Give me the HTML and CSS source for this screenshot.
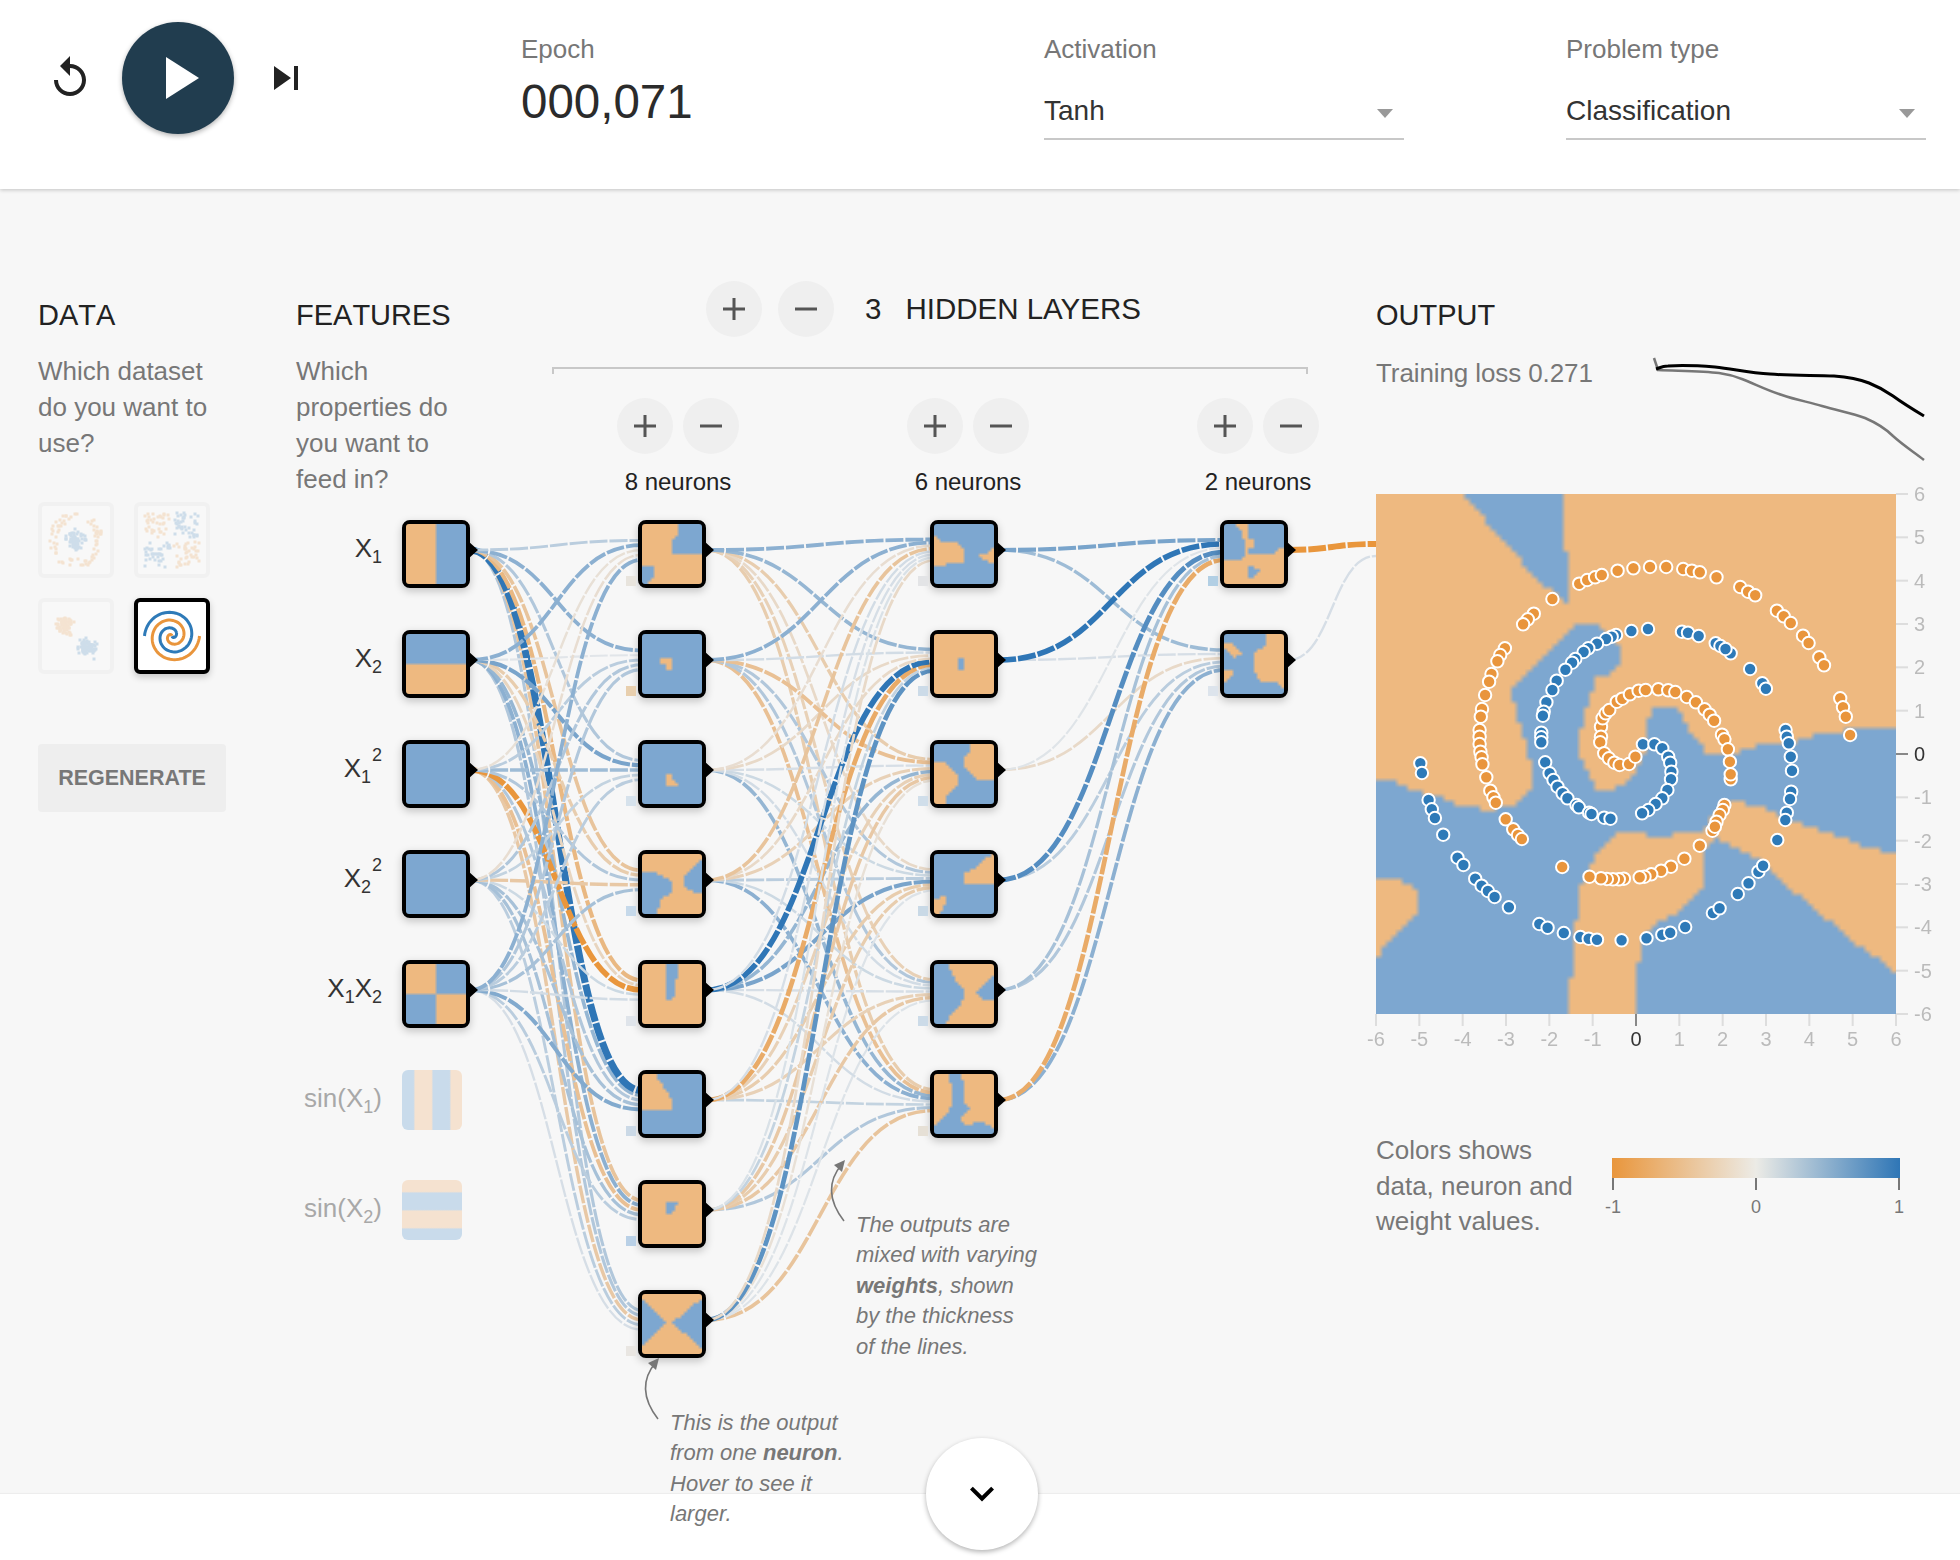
FILE: index.html
```html
<!DOCTYPE html>
<html lang="en">
<head>
<meta charset="utf-8">
<title>Neural network playground</title>
<link rel="stylesheet" href="styles.css">
</head>
<body>
<header class="topbar">
  <div class="controls">
    <svg class="icon48" viewBox="0 0 24 24"><path d="M12 5V1L7 6l5 5V7c3.31 0 6 2.69 6 6s-2.69 6-6 6-6-2.69-6-6H4c0 4.42 3.58 8 8 8s8-3.58 8-8-3.58-8-8-8z"/></svg>
    <div class="play"><svg class="play-glyph" viewBox="0 0 33 42"><path d="M0 0l33 21L0 42z"/></svg></div>
    <svg class="icon48" viewBox="0 0 24 24"><path d="M6 18l8.5-6L6 6v12zM16 6v12h2V6h-2z"/></svg>
  </div>
  <div class="metric">
    <div class="top-label">Epoch</div>
    <div class="epoch">000,071</div>
  </div>
  <div class="metric">
    <div class="top-label">Activation</div>
    <div class="select"><span>Tanh</span><i class="caret"></i></div>
  </div>
  <div class="metric">
    <div class="top-label">Problem type</div>
    <div class="select"><span>Classification</span><i class="caret"></i></div>
  </div>
</header>

<main class="workspace">
  <section class="data-col">
    <h4>DATA</h4>
    <p class="lead">Which dataset<br>do you want to<br>use?</p>
    <div class="datasets">
      <div class="dataset" data-kind="circle"></div>
      <div class="dataset" data-kind="xor"></div>
      <div class="dataset" data-kind="gauss"></div>
      <div class="dataset selected" data-kind="spiral"></div>
    </div>
    <button class="regen">REGENERATE</button>
  </section>

  <section class="network" id="network">
    <div class="features">
      <h4>FEATURES</h4>
      <p class="lead">Which<br>properties do<br>you want to<br>feed in?</p>
    </div>
    <div class="layers">
      <div class="layers-top">
        <button class="round"><svg viewBox="0 0 24 24"><path d="M12 1v22M1 12h22"/></svg></button>
        <button class="round"><svg viewBox="0 0 24 24"><path d="M1 12h22"/></svg></button>
        <span class="layer-count">3</span>
        <span class="layer-title">HIDDEN LAYERS</span>
      </div>
      <div class="bracket"></div>
    </div>
    <div class="layer-head" data-center="678">
      <div class="pair">
        <button class="round"><svg viewBox="0 0 24 24"><path d="M12 1v22M1 12h22"/></svg></button>
        <button class="round"><svg viewBox="0 0 24 24"><path d="M1 12h22"/></svg></button>
      </div>
      <div class="neurons">8 neurons</div>
    </div>
    <div class="layer-head" data-center="968">
      <div class="pair">
        <button class="round"><svg viewBox="0 0 24 24"><path d="M12 1v22M1 12h22"/></svg></button>
        <button class="round"><svg viewBox="0 0 24 24"><path d="M1 12h22"/></svg></button>
      </div>
      <div class="neurons">6 neurons</div>
    </div>
    <div class="layer-head" data-center="1258">
      <div class="pair">
        <button class="round"><svg viewBox="0 0 24 24"><path d="M12 1v22M1 12h22"/></svg></button>
        <button class="round"><svg viewBox="0 0 24 24"><path d="M1 12h22"/></svg></button>
      </div>
      <div class="neurons">2 neurons</div>
    </div>
    <div class="feature-label" data-row="0">X<sub>1</sub></div>
    <div class="feature-label" data-row="1">X<sub>2</sub></div>
    <div class="feature-label" data-row="2">X<sub>1</sub><sup>2</sup></div>
    <div class="feature-label" data-row="3">X<sub>2</sub><sup>2</sup></div>
    <div class="feature-label" data-row="4">X<sub>1</sub>X<sub>2</sub></div>
    <div class="feature-label off" data-row="5">sin(X<sub>1</sub>)</div>
    <div class="feature-label off" data-row="6">sin(X<sub>2</sub>)</div>
    <div class="sin-node sin-x1" data-row="5"></div>
    <div class="sin-node sin-x2" data-row="6"></div>
  </section>

  <section class="output-col">
    <h4>OUTPUT</h4>
    <div class="loss-row">
      <span class="loss-text">Training loss 0.271</span>
      <svg class="loss-chart" viewBox="0 0 270 104">
        <path class="loss-test" d="M0 0L4 12C30 13 50 13 65 15C80 17 85 20 93 23C105 28 115 33 128 37C142 42 155 44 168 48C185 53 198 55 211 60C225 66 232 71 239 78C250 88 260 94 270 102"/>
        <path class="loss-train" d="M2 11C5 10 9 8 14 8C30 7 48 8 61 9C80 11 95 15 116 16C140 18 160 17 180 18C195 19 205 21 215 25C225 29 232 33 239 38C250 46 260 52 270 58"/>
      </svg>
    </div>
    <div class="plot" id="plot">
      <canvas id="heatmap" width="100" height="100"></canvas>
      <svg id="plot-overlay" viewBox="0 0 520 520"></svg>
    </div>
    <div class="legend">
      <p class="legend-text">Colors shows<br>data, neuron and<br>weight values.</p>
      <div class="scale">
        <div class="scale-bar"></div>
        <div class="scale-ticks">
          <div class="tick"><i></i><span>-1</span></div>
          <div class="tick"><i></i><span>0</span></div>
          <div class="tick"><i></i><span>1</span></div>
        </div>
      </div>
    </div>
  </section>
</main>

<footer class="bottom"></footer>

<div class="note note-weights">
  <svg class="note-arrow" viewBox="0 0 20 62"><path class="arrow-line" d="M16 61Q-8 30 14 4"/><path class="arrow-head" d="M17 0L6 5L14 12z"/></svg>
  The outputs are<br>mixed with varying<br><b>weights</b>, shown<br>by the thickness<br>of the lines.
</div>
<div class="note note-neuron">
  <svg class="note-arrow" viewBox="0 0 20 62"><path class="arrow-line" d="M16 61Q-8 30 14 4"/><path class="arrow-head" d="M17 0L6 5L14 12z"/></svg>
  This is the output<br>from one <b>neuron</b>.<br>Hover to see it<br>larger.
</div>
<div class="fab"><svg viewBox="0 0 24 24"><path d="M7.41 7.84L12 12.42l4.59-4.58L18 9.25l-6 6-6-6z"/></svg></div>

<script src="script.js"></script>
</body>
</html>
```

FILE: styles.css
```css
* { box-sizing: border-box; }
html, body { margin: 0; padding: 0; }
body {
  position: relative;
  width: 1960px;
  height: 1560px;
  overflow: hidden;
  background: #fff;
  font-family: "Liberation Sans", Arial, sans-serif;
  color: #222;
}
button { font-family: inherit; border: 0; padding: 0; }

/* top bar */
.topbar {
  position: relative;
  z-index: 3;
  display: grid;
  grid-template-columns: 521px 523px 522px 360px;
  height: 189px;
  background: #fff;
  box-shadow: 0 1px 4px rgba(0, 0, 0, .22);
}
.controls { display: flex; align-items: center; gap: 28px; height: 112px; margin-top: 22px; padding-left: 46px; }
.icon48 { width: 48px; height: 48px; fill: #222; }
.play {
  display: flex; align-items: center; justify-content: center;
  width: 112px; height: 112px; border-radius: 50%;
  background: #213d4f; box-shadow: 0 2px 5px rgba(0, 0, 0, .3);
}
.play-glyph { width: 33px; height: 42px; margin-left: 9px; fill: #fff; }
.metric { padding-top: 34px; }
.top-label { font-size: 26px; line-height: 30px; color: #777; }
.epoch { margin-top: 10px; font-size: 47.5px; line-height: 56px; color: #2b2b2b; }
.select {
  display: flex; align-items: center; justify-content: space-between;
  width: 360px; height: 49px; margin-top: 27px; padding: 0 11px 7px 0;
  border-bottom: 2px solid #c8c8c8;
  font-size: 28px; line-height: 40px; color: #333;
}
.caret { width: 0; height: 0; margin-top: 5px; border: 8px solid transparent; border-top: 9px solid #999; border-bottom: 0; }

/* workspace */
.workspace { display: flex; height: 1305px; background: #f7f7f7; }
h4 { margin: 0; font-size: 29px; font-weight: 400; font-kerning: none; line-height: 40px; color: #222; }
.lead { margin: 18px 0 0; font-size: 26px; line-height: 36px; color: #777; }

.data-col { width: 296px; padding: 106px 0 0 38px; }
.datasets { display: grid; grid-template-columns: 76px 76px; gap: 20px; margin-top: 41px; }
.dataset {
  width: 76px; height: 76px; border: 4px solid #ddd; border-radius: 6px;
  background: #fff; opacity: .2; overflow: hidden;
}
.dataset svg { display: block; width: 68px; height: 68px; }
.dataset.selected { border-color: #000; opacity: 1; box-shadow: 0 3px 7px rgba(0, 0, 0, .2); }
.regen {
  display: block; width: 188px; height: 68px; margin-top: 70px;
  border-radius: 4px; background: #eee; color: #777;
  font-size: 21.5px; font-weight: 700;
}

.network { position: relative; display: flex; width: 1080px; }
.features { width: 180px; padding-top: 106px; }
.layers { padding-top: 92px; }
.layers-top { display: flex; align-items: center; height: 56px; padding-left: 230px; }
.layers-top .round + .round { margin-left: 16px; }
.layer-count { margin-left: 31px; font-size: 29.5px; color: #222; }
.layer-title { margin-left: 24px; font-size: 29.5px; color: #222; }
.bracket { width: 756px; height: 7px; margin: 30px 0 0 76px; border: 2px solid #c8c8c8; border-bottom: 0; }
.round {
  display: flex; align-items: center; justify-content: center;
  width: 56px; height: 56px; border-radius: 50%; background: #efefef;
}
.round svg { width: 24px; height: 24px; fill: none; stroke: #555; stroke-width: 3; }

.layer-head { position: absolute; top: 209px; display: flex; flex-direction: column; align-items: center; width: 200px; margin-left: -100px; }
.pair { display: flex; gap: 10px; }
.neurons { margin-top: 13px; font-size: 24px; line-height: 30px; color: #222; }

.links { position: absolute; left: 0; top: 0; width: 1080px; height: 1305px; overflow: visible; }
.link { fill: none; stroke-dasharray: 18 2; }
.marker { fill: #000; }

.node {
  position: absolute; width: 68px; height: 68px;
  border: 4px solid #000; border-radius: 8px;
  box-shadow: 0 3px 8px rgba(0, 0, 0, .22);
  background: #000;
}
.node canvas { display: block; width: 60px; height: 60px; border-radius: 3px; }
.bias { position: absolute; width: 10px; height: 10px; }

.feature-label {
  position: absolute; left: -136px; width: 222px; height: 56px;
  display: flex; align-items: center; justify-content: flex-end;
  font-size: 26px; line-height: 1; color: #333; white-space: pre;
}
.feature-label.off { color: #a8a8a8; }
.feature-label sub { font-size: 18px; line-height: 0; position: relative; top: 9px; vertical-align: baseline; }
.feature-label sup { font-size: 18px; line-height: 0; position: relative; top: -13px; vertical-align: baseline; margin-left: 1px; }

.sin-node { position: absolute; left: 106px; width: 60px; height: 60px; border-radius: 6px; }
.sin-x1 { background: linear-gradient(90deg, #c9dbeb 0 19%, #f5e2d0 22% 49%, #c9dbeb 52% 79%, #f5e2d0 82%); }
.sin-x2 { background: linear-gradient(180deg, #f5e2d0 0 19%, #c9dbeb 22% 49%, #f5e2d0 52% 79%, #c9dbeb 82%); }

/* output */
.output-col { width: 584px; padding-top: 106px; }
.loss-row { display: flex; height: 107px; margin-top: 18px; }
.loss-text { width: 278px; font-size: 26px; line-height: 40px; color: #777; letter-spacing: -.1px; }
.loss-chart { width: 270px; height: 104px; margin-top: 5px; overflow: visible; fill: none; }
.loss-test { stroke: #777; stroke-width: 2.5; }
.loss-train { stroke: #000; stroke-width: 3; }
.plot { position: relative; width: 520px; height: 520px; margin-top: 34px; }
.plot canvas { display: block; width: 520px; height: 520px; }
#plot-overlay { position: absolute; left: 0; top: 0; width: 520px; height: 520px; overflow: visible; }
.dot { stroke: #fff; stroke-width: 2; }
.axis-tick { stroke: #ddd; stroke-width: 2; }
.axis-tick.zero { stroke: #888; }
.axis-label { font-size: 20px; fill: #bbb; }
.axis-label.zero { fill: #333; }

.legend { display: flex; margin-top: 119px; }
.legend-text { width: 236px; margin: 0; font-size: 26px; line-height: 35.5px; color: #777; }
.scale { width: 288px; margin-top: 25px; }
.scale-bar { height: 20px; background: linear-gradient(90deg, #e9963c, #ecebe6 50%, #2f76b6); }
.scale-ticks { display: flex; justify-content: space-between; }
.tick { display: flex; flex-direction: column; align-items: center; width: 2px; }
.tick i { flex: none; width: 2px; height: 12px; background: #777; }
.tick span { margin-top: 6px; font-size: 18px; line-height: 22px; color: #777; }

/* bottom */
.bottom { height: 66px; background: #fff; box-shadow: 0 -1px 1px rgba(0, 0, 0, .04); position: relative; }
.fab {
  position: absolute; left: 926px; top: 1438px; z-index: 4;
  display: flex; align-items: center; justify-content: center;
  width: 112px; height: 112px; border-radius: 50%;
  background: #fff; box-shadow: 0 2px 5px rgba(0, 0, 0, .3);
}
.fab svg { width: 48px; height: 48px; margin-top: 2px; fill: #000; }

.note { position: absolute; z-index: 2; font-size: 22px; font-style: italic; line-height: 30.4px; color: #777; white-space: nowrap; }
.note-weights { left: 856px; top: 1210px; }
.note-neuron { left: 670px; top: 1408px; }
.note-arrow { position: absolute; left: -28px; top: -50px; width: 20px; height: 62px; overflow: visible; }
.arrow-line { fill: none; stroke: #777; stroke-width: 1.6; }
.arrow-head { fill: #777; }
```

FILE: script.js
```js
const NS = 'http://www.w3.org/2000/svg';
const ORIGIN = { x: 296, y: 189 };
const BLUE = '#7da7d0';
const ORANGE = '#eeb980';
const network = document.getElementById('network');

function svgEl(tag, attrs, parent) {
  const el = document.createElementNS(NS, tag);
  for (const key in attrs) el.setAttribute(key, attrs[key]);
  if (parent) parent.appendChild(el);
  return el;
}

/* ---------- heatmaps: polygons sampled on a coarse grid ---------- */
function paintHeat(canvas, localSize, base, regions) {
  const ctx = canvas.getContext('2d');
  const n = canvas.width;
  const paths = regions.map(([color, pts]) => {
    const p = new Path2D();
    for (let i = 0; i < pts.length; i += 2) {
      if (i === 0) p.moveTo(pts[0], pts[1]); else p.lineTo(pts[i], pts[i + 1]);
    }
    p.closePath();
    return [color, p];
  });
  const k = localSize / n;
  for (let cy = 0; cy < n; cy++) {
    for (let cx = 0; cx < n; cx++) {
      let color = base;
      for (const [c, p] of paths) {
        if (ctx.isPointInPath(p, (cx + .5) * k, (cy + .5) * k)) color = c;
      }
      ctx.fillStyle = color;
      ctx.fillRect(cx, cy, 1, 1);
    }
  }
}

const B = BLUE, O = ORANGE;
const INPUT_HEAT = [
  [O, [[B, [30,0, 60,0, 60,60, 30,60]]]],
  [B, [[O, [0,30, 60,30, 60,60, 0,60]]]],
  [B, []],
  [B, []],
  [B, [[O, [0,0, 30,0, 30,30, 0,30]], [O, [30,30, 60,30, 60,60, 30,60]]]],
];
const L1_HEAT = [
  [O, [[B, [36,0, 36,9, 30,16, 30,29, 60,29, 60,0]], [B, [0,42, 13,42, 13,51, 5,60, 0,60]]]],
  [B, [[O, [18,24, 29,24, 30,36, 26,36, 24,30, 18,28]]]],
  [B, [[O, [24,29, 28,29, 30,35, 36,39, 34,42, 24,42]]]],
  [O, [[B, [0,19, 15,19, 30,28, 30,39, 20,44, 14,60, 0,60]], [B, [60,6, 43,23, 43,34, 60,41]]]],
  [O, [[B, [23,0, 36,0, 36,12, 33,16, 33,34, 25,36, 23,28]]]],
  [B, [[O, [0,0, 13,0, 21,11, 29,26, 29,35, 0,35]]]],
  [O, [[B, [23,17, 37,19, 29,30, 24,30, 23,26]]]],
  [O, [[B, [0,5, 23,29, 0,52]], [B, [60,4, 30,29, 60,54]]]],
];
const L2_HEAT = [
  [B, [[O, [0,11, 8,18, 21,18, 31,28, 29,38, 10,41, 0,41]], [O, [60,24, 53,29, 42,33, 53,36, 60,41]]]],
  [O, [[B, [24,24, 30,24, 31,28, 31,33, 30,36, 24,36, 23,33, 23,28]]]],
  [B, [[O, [36,0, 60,0, 60,35, 44,35, 31,23, 31,13, 36,9]], [O, [0,18, 10,18, 24,33, 23,43, 13,51, 11,60, 0,60]]]],
  [B, [[O, [60,0, 60,29, 31,29, 31,19, 44,13, 54,3]], [O, [0,44, 11,43, 11,51, 4,60, 0,60]]]],
  [O, [[B, [0,0, 13,0, 21,16, 31,28, 28,39, 19,49, 11,60, 0,60]], [B, [60,11, 41,28, 49,36, 60,36]]]],
  [O, [[B, [13,0, 28,0, 29,11, 31,31, 36,33, 24,45, 29,50, 49,49, 60,54, 60,60, 0,60, 0,52, 13,40, 19,29, 18,11]]]],
];
const L3_HEAT = [
  [B, [[O, [13,0, 23,0, 23,13, 29,16, 29,23, 31,31, 49,29, 60,23, 60,60, 0,60, 0,36, 19,36, 21,23, 18,8, 13,4]],
       [B, [24,24, 29,24, 29,30, 24,30]], [B, [23,43, 37,44, 27,54, 23,54]]]],
  [B, [[O, [43,0, 60,0, 60,54, 54,48, 36,48, 31,39, 31,19, 41,11]], [O, [0,8, 6,8, 18,21, 9,23, 0,13]], [O, [0,34, 12,39, 0,49]]]],
];
const BIAS = [
  null,
  ['#e8e4dd', '#e8cfae', '#d6e2ec', '#c6d9ea', '#dfe4ea', '#cbd9e6', '#b9d0e6', '#e9e6e2'],
  ['#e3e4e6', '#ccdbe8', '#d0deea', '#c9d9e6', '#ccdbe8', '#e6e0d6'],
  ['#b2cfe4', '#dde4ec'],
];

const LAYER_X = [402, 638, 930, 1220];
const HEATS = [INPUT_HEAT, L1_HEAT, L2_HEAT, L3_HEAT];
const rowTop = i => 520 + 110 * i;

/* ---------- link weights: one row per target node, one column per source ---------- */
const WEIGHTS = [
  [
    [.25, .5, -.12, -.15, .5],
    [.5, .04, .25, .3, .3],
    [.3, .6, .4, .2, .25],
    [-.45, -.35, .3, -.4, .35],
    [-.6, -.25, -1, .15, .12],
    [1.4, .45, .3, .35, .55],
    [-.45, .5, -.5, .35, .25],
    [.3, .3, -.4, .25, .1],
  ],
  [
    [.5, .5, -.15, -.45, .12, .1, .08, -.2],
    [.45, .12, -.2, -.2, 1, -.75, .2, .75],
    [-.35, -.5, .1, -.3, .45, -.3, -.4, -.12],
    [-.2, .3, .15, .25, .6, -.35, -.35, .06],
    [-.3, .3, .12, .15, .1, -.3, -.4, .06],
    [-.35, -.5, .45, .5, .12, .2, .3, -.45],
  ],
  [
    [.6, 1, .05, .8, .35, -.75],
    [.4, .1, -.2, .25, .3, .5],
  ],
];

function linkColor(w) {
  const t = Math.min(Math.abs(w), 1);
  const end = w < 0 ? [233, 150, 60] : [47, 118, 182];
  const mid = [232, 234, 235];
  return 'rgb(' + mid.map((m, i) => Math.round(m + (end[i] - m) * t)).join(',') + ')';
}

const linkSvg = svgEl('svg', {
  class: 'links',
  viewBox: `${ORIGIN.x} ${ORIGIN.y} 1080 1305`,
});
network.appendChild(linkSvg);

function addLink(sx, sy, tx, ty, w) {
  const mx = (sx + tx) / 2;
  svgEl('path', {
    class: 'link',
    d: `M${sx} ${sy}C${mx} ${sy} ${mx} ${ty} ${tx} ${ty}`,
    stroke: linkColor(w),
    'stroke-width': (2 + 3.6 * Math.abs(w)).toFixed(2),
  }, linkSvg);
}

/* output links first, so they lie under everything else */
[[-1.1, -6], [.1, 6]].forEach(([w, off], i) => addLink(1288, rowTop(i) + 30, 1376, 550 + off, w));
for (let l = WEIGHTS.length - 1; l >= 0; l--) {
  const targets = WEIGHTS[l];
  for (let t = targets.length - 1; t >= 0; t--) {
    const row = targets[t];
    for (let s = row.length - 1; s >= 0; s--) {
      const offset = (s - (row.length - 1) / 2) / row.length * 24;
      addLink(LAYER_X[l] + 68, rowTop(s) + 30, LAYER_X[l + 1] + 4, rowTop(t) + 30 + offset, row[s]);
    }
  }
}

/* ---------- nodes ---------- */
HEATS.forEach((layer, l) => {
  layer.forEach(([base, regions], i) => {
    const x = LAYER_X[l], y = rowTop(i);
    const node = document.createElement('div');
    node.className = 'node';
    node.style.left = x - ORIGIN.x + 'px';
    node.style.top = y - ORIGIN.y + 'px';
    const canvas = document.createElement('canvas');
    canvas.width = 20; canvas.height = 20;
    node.appendChild(canvas);
    network.appendChild(node);
    paintHeat(canvas, 60, base, regions);
    svgEl('path', { class: 'marker', d: `M${x + 66} ${y + 21}L${x + 76} ${y + 30}L${x + 66} ${y + 39}z` }, linkSvg);
    if (BIAS[l]) {
      const bias = document.createElement('div');
      bias.className = 'bias';
      bias.style.left = x - 12 - ORIGIN.x + 'px';
      bias.style.top = y + 56 - ORIGIN.y + 'px';
      bias.style.background = BIAS[l][i];
      network.appendChild(bias);
    }
  });
});

document.querySelectorAll('.layer-head').forEach(el => {
  el.style.left = el.dataset.center - ORIGIN.x + 'px';
});
document.querySelectorAll('.feature-label, .sin-node').forEach(el => {
  el.style.top = rowTop(+el.dataset.row) - ORIGIN.y + 'px';
});

/* ---------- output plot ---------- */
const PLOT_REGIONS = [
  [B, [87,0, 188,0, 188,56, 193,59, 193,109, 188,109, 150,73]],
  [B, [0,286, 15,286, 27,293, 63,303, 83,311, 110,316, 138,311, 156,293, 156,276, 150,249, 140,219, 135,193,
       162,169, 199,130, 223,130, 246,156, 246,166, 233,181, 219,184, 215,203, 209,216, 203,243, 203,263,
       213,279, 219,294, 241,294, 255,283, 270,259, 270,229, 278,214, 300,214, 314,236, 330,259, 359,260,
       385,250, 415,249, 440,241, 482,234, 520,233, 520,359, 494,354, 466,344, 419,328, 389,314, 359,307,
       340,316, 328,338, 308,339, 280,343, 261,338, 241,339, 225,353, 217,369, 203,396, 201,419, 198,439,
       197,483, 193,484, 193,520, 260,520, 261,473, 265,464, 265,443, 280,429, 300,421, 322,399, 327,393,
       327,356, 340,344, 359,353, 383,366, 399,379, 419,399, 446,421, 478,448, 520,478, 520,520, 0,520]],
  [O, [0,386, 23,386, 39,394, 41,419, 23,439, 0,463]],
];
paintHeat(document.getElementById('heatmap'), 520, O, PLOT_REGIONS);

const upper = ([x, y]) => [(x - 91) / 2.529, (y - 462) / 3];
const lower = ([x, y]) => [(x - 91) / 2.529, y / 3 + 266];
const ORANGE_DOTS = [
  ...[[605,731],[625,720],[645,712],[662,705],[702,692],[742,685],[784,681],[825,681],[868,687],[890,692],[910,697],[952,712],[1012,741],[1032,755],[1050,766],[1105,812],[1122,829],[1140,849],[1171,887],[1185,909],[1212,952],[1224,976],[1265,1075],[1272,1102],[1279,1130],[1290,1185],
    [537,777],[490,821],[475,838],[463,853],[417,925],[405,945],[398,964],[383,1002],[377,1025],[367,1065],[359,1107],[356,1130],[353,1170],[353,1190],[353,1212],[355,1235],[358,1252],[360,1273],[370,1312],[380,1352],[388,1372],[394,1388],[419,1438],[438,1468],[450,1485],[460,1497],
    [660,1160],[660,1190],[658,1207],[668,1240],[680,1255],[694,1268],[707,1275],[731,1272],[747,1250],[664,1135],[672,1120],[681,1110],[700,1085],[714,1076],[733,1063],[755,1052],[773,1050],[805,1048],[830,1051],[848,1056],[877,1071],[900,1087],[922,1108],[935,1124],[946,1142],[966,1184],[972,1198],[981,1228],[986,1265],[988,1318],[988,1303]].map(upper),
  ...[[972,135],[968,150],[960,165],[952,185],[942,212],[948,200],[910,257],[871,296],[837,320],[812,332],[787,343],[770,350],[758,352],[718,356],[705,358],[690,358],[675,357],[660,355],[631,350],[562,321]].map(lower),
];
const BLUE_DOTS = [
  ...[[1127,1170],[1130,1190],[1135,1210],[1140,1250],[1143,1292],[1141,1355],[1138,1377],[1130,1418],[1126,1440],[1106,1500],
    [737,873],[779,867],[865,875],[880,878],[907,888],[950,910],[962,918],[988,940],[975,927],[1037,987],[1068,1030],[1077,1046],
    [698,885],[687,890],[673,897],[650,911],[628,925],[616,936],[595,957],[587,968],[570,989],[548,1022],[537,1050],[522,1087],[515,1115],[513,1127],[509,1178],[509,1192],[509,1207],[519,1267],[530,1300],[540,1320],[550,1340],[563,1360],[575,1375],[598,1395],[604,1402],[630,1418],[636,1422],[668,1433],[684,1436],
    [766,1213],[795,1213],[815,1225],[830,1250],[835,1268],[838,1295],[837,1318],[828,1350],[815,1375],[798,1392],[780,1410],[764,1420],
    [203,1270],[207,1299],[224,1380],[232,1408],[240,1434],[261,1484]].map(upper),
  ...[[297,293],[312,315],[342,356],[358,377],[374,393],[391,411],[427,442],[504,492],[525,503],[566,519],[608,531],[629,536],[650,539],[712,541],[775,535],[815,524],[835,518],[873,501],[943,459],[960,445],[1006,402],[1033,370],[1058,335],[1070,317]].map(lower),
];
const overlay = document.getElementById('plot-overlay');
const dots = (list, fill) => list.forEach(([cx, cy]) =>
  svgEl('circle', { class: 'dot', cx: cx.toFixed(1), cy: cy.toFixed(1), r: 6.2, fill }, overlay));
dots(ORANGE_DOTS, '#e9953c');
dots(BLUE_DOTS, '#2e7ab8');

for (let v = -6; v <= 6; v++) {
  const zero = v === 0 ? ' zero' : '';
  const pos = (v + 6) * 520 / 12;
  svgEl('line', { class: 'axis-tick' + zero, x1: pos, x2: pos, y1: 520, y2: 532 }, overlay);
  const xl = svgEl('text', { class: 'axis-label' + zero, x: pos, y: 552, 'text-anchor': 'middle' }, overlay);
  xl.textContent = v;
  const ypos = 520 - pos;
  svgEl('line', { class: 'axis-tick' + zero, x1: 520, x2: 532, y1: ypos, y2: ypos }, overlay);
  const yl = svgEl('text', { class: 'axis-label' + zero, x: 538, y: ypos + 7 }, overlay);
  yl.textContent = v;
}

/* ---------- dataset thumbnails ---------- */
let seed = 20;
function rnd() { seed = (seed * 16807) % 2147483647; return seed / 2147483647; }
function gauss() { return (rnd() + rnd() + rnd() + rnd() - 2) * 1.2; }

const SAMPLERS = {
  circle(add) {
    for (let i = 0; i < 75; i++) {
      const a = rnd() * 6.283, r = rnd() * 2;
      add(r * Math.sin(a), r * Math.cos(a), '#2e7ab8');
      const ro = 3.5 + rnd() * 1.6, ao = rnd() * 6.283;
      add(ro * Math.sin(ao), ro * Math.cos(ao), '#e9953c');
    }
  },
  xor(add) {
    for (let i = 0; i < 150; i++) {
      const x = (rnd() * 4.6 + .4) * (rnd() < .5 ? -1 : 1);
      const y = (rnd() * 4.6 + .4) * (rnd() < .5 ? -1 : 1);
      add(x, y, x * y < 0 ? '#2e7ab8' : '#e9953c');
    }
  },
  gauss(add) {
    for (let i = 0; i < 80; i++) {
      add(-2 + gauss() * 1.05, -2 + gauss() * 1.05, '#e9953c');
      add(2 + gauss() * 1.05, 2 + gauss() * 1.05, '#2e7ab8');
    }
  },
};

document.querySelectorAll('.dataset').forEach(box => {
  const svg = svgEl('svg', { viewBox: '-34 -34 68 68' }, box);
  const kind = box.dataset.kind;
  if (kind === 'spiral') {
    [[0, '#2e7ab8'], [Math.PI, '#e9953c']].forEach(([delta, stroke]) => {
      const pts = [];
      for (let i = 1; i <= 120; i++) {
        const r = i / 120 * 5, t = 1.75 * i / 120 * 2 * Math.PI + delta;
        pts.push((5.5 * r * Math.sin(t)).toFixed(1) + ',' + (5.5 * r * Math.cos(t)).toFixed(1));
      }
      svgEl('polyline', { points: pts.join(' '), fill: 'none', stroke, 'stroke-width': 3 }, svg);
    });
  } else {
    SAMPLERS[kind]((x, y, fill) => svgEl('rect', {
      x: Math.round(x * 5.5) - 1.5, y: Math.round(y * 5.5) - 1.5, width: 3, height: 3, fill,
    }, svg));
  }
});
```
